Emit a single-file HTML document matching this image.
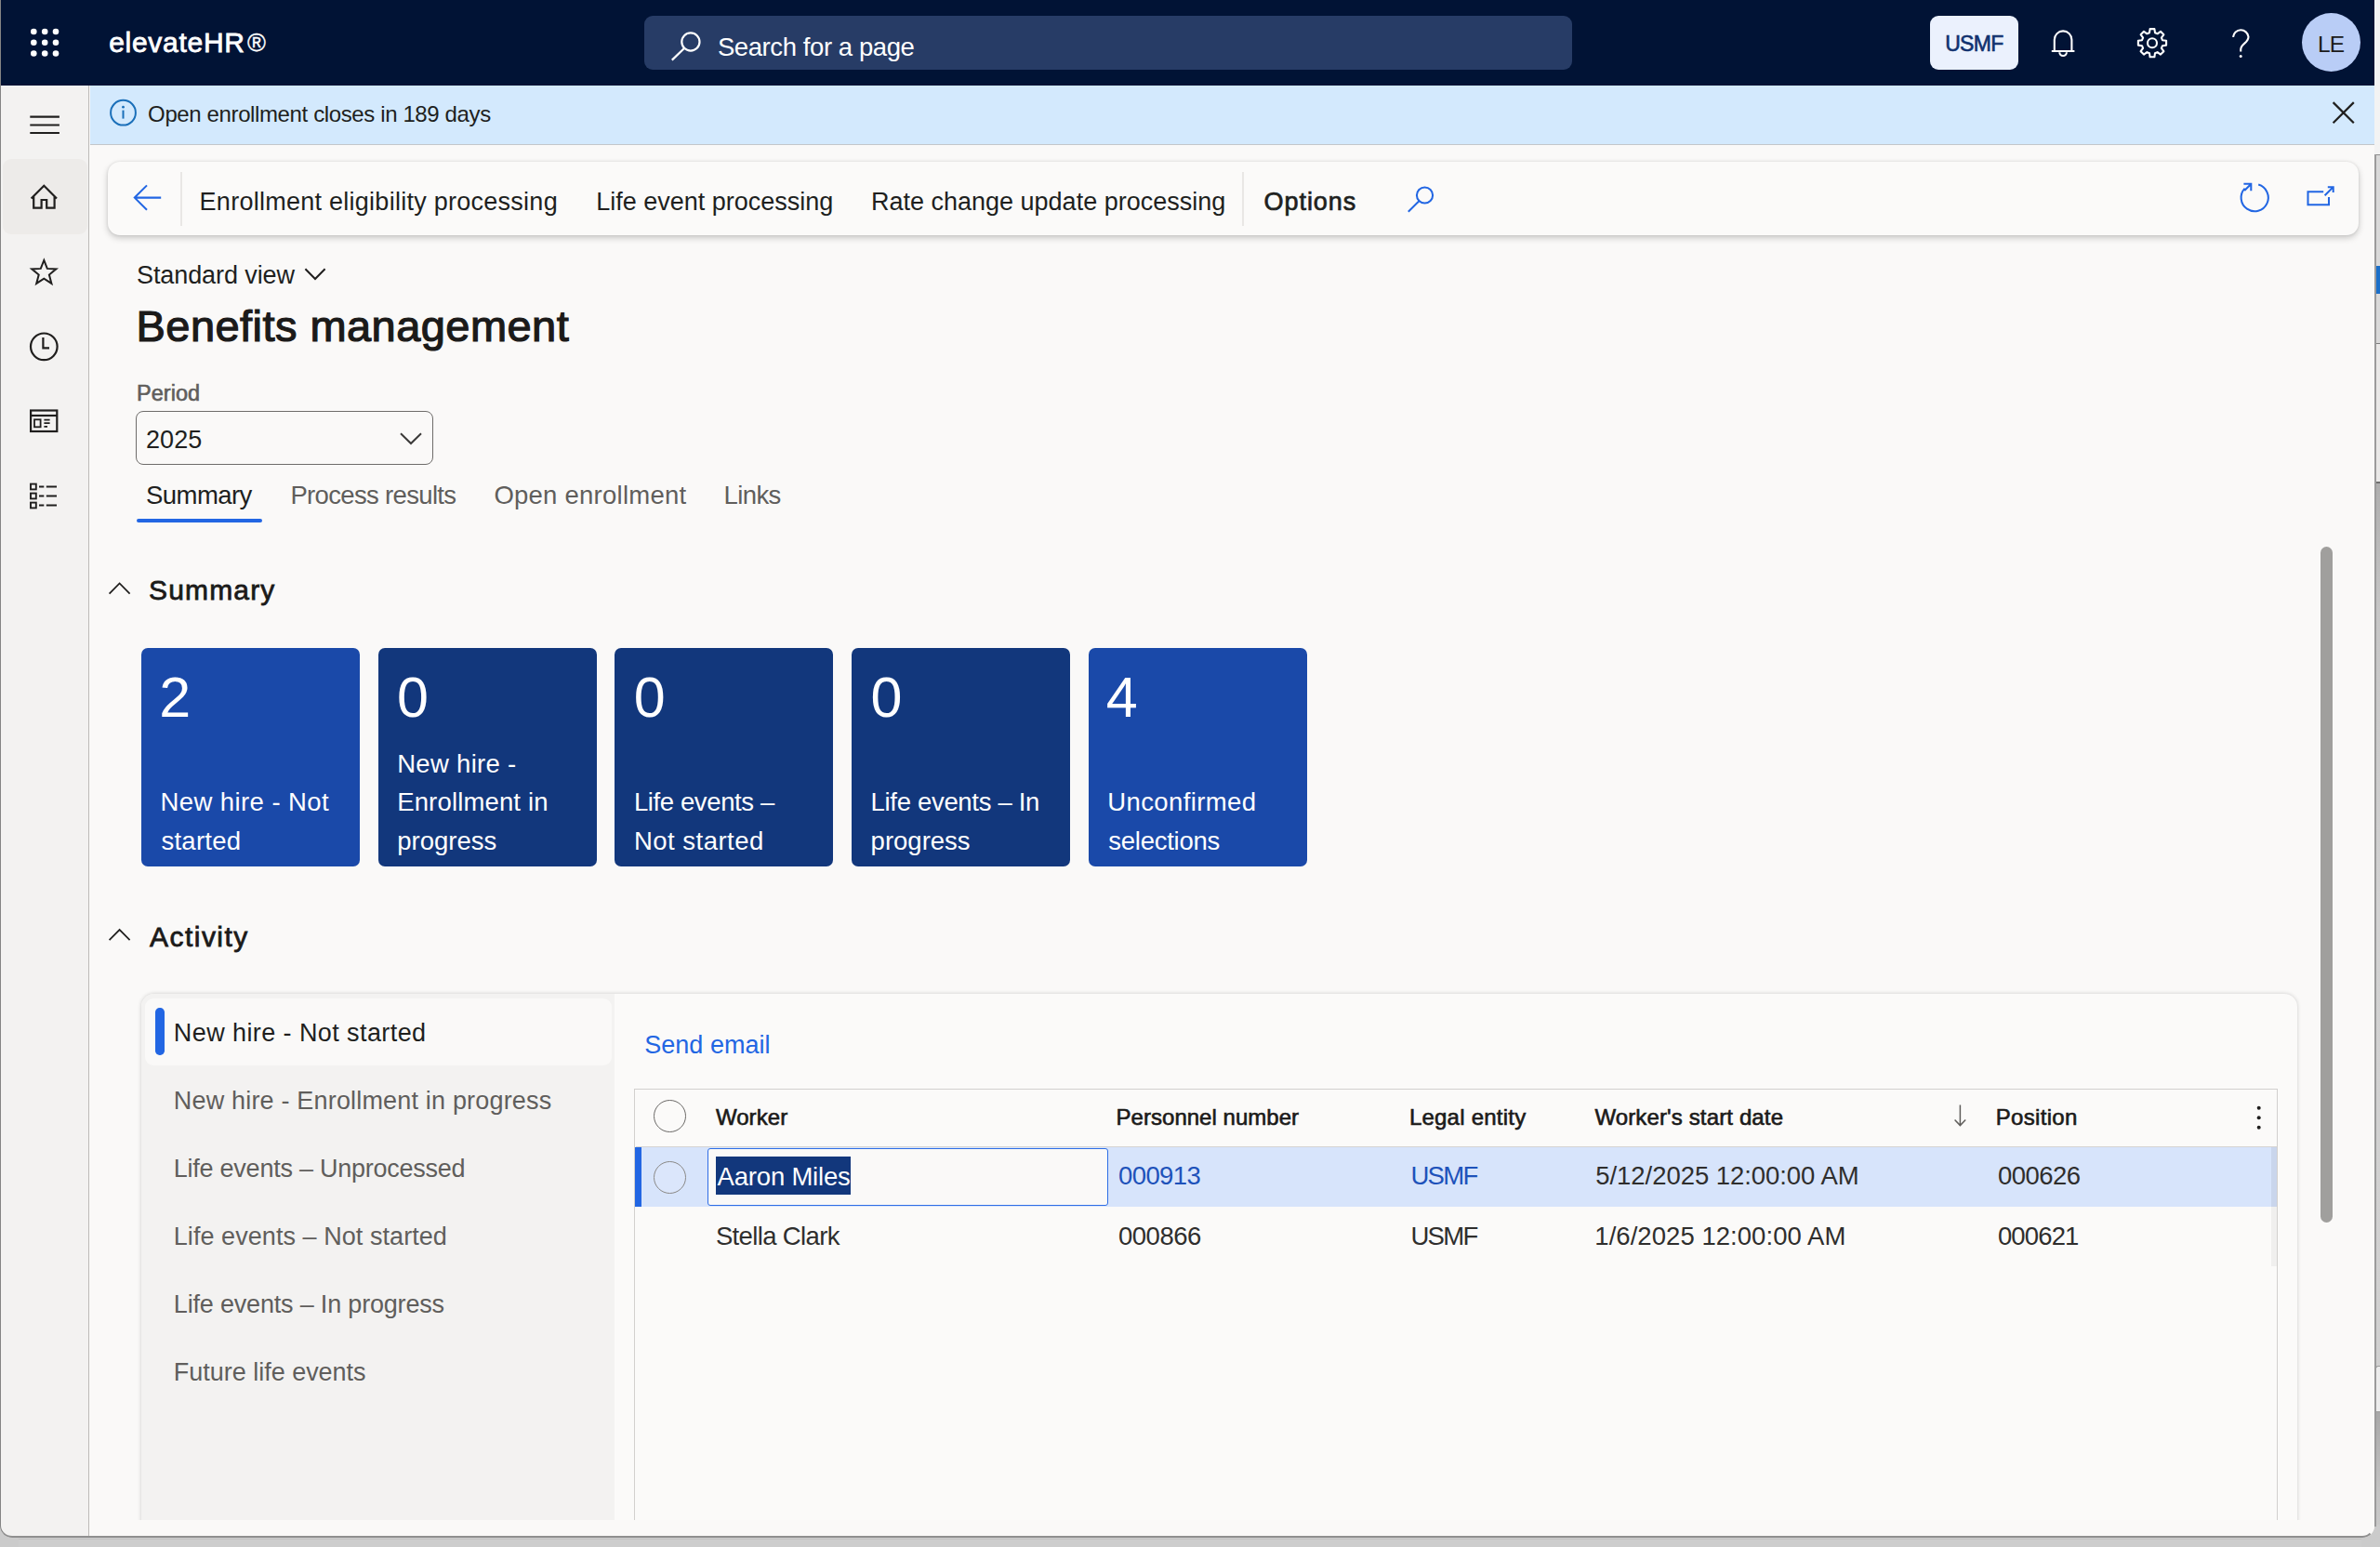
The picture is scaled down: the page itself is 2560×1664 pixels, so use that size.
<!DOCTYPE html>
<html lang="en"><head><meta charset="utf-8"><title>Benefits management</title>
<style>
html,body{margin:0;padding:0;}
html{width:2560px;height:1664px;overflow:hidden;}
body{width:2560px;height:1664px;overflow:hidden;position:relative;background:#cbcbcb;font-family:"Liberation Sans",sans-serif;}
.a{position:absolute;}
.t{position:absolute;white-space:pre;line-height:1;font-family:"Liberation Sans",sans-serif;}
svg{position:absolute;overflow:visible;}
#win{position:absolute;left:0;top:0;width:2554px;height:1654px;background:#faf9f8;border-radius:0 0 13px 13px;overflow:hidden;}
#winedge{position:absolute;left:0;top:0;width:2554px;height:1654px;border-radius:0 0 13px 13px;box-sizing:border-box;border-left:1.5px solid #858585;border-bottom:2px solid #8f8f8f;border-right:2px solid transparent;pointer-events:none;}
#topbar{left:0;top:0;width:2554px;height:92px;background:#011335;}
#searchbox{left:693px;top:17px;width:998px;height:58px;border-radius:9px;background:#273c66;}
#usmfbtn{left:2076px;top:17px;width:95px;height:58px;border-radius:9px;background:#ebf1fd;}
#avatar{left:2475.5px;top:13.7px;width:63px;height:63px;border-radius:50%;background:#b9cdf6;}
#nav{left:0;top:92px;width:95px;height:1562px;background:#f3f2f1;}
#navline{left:95px;top:92px;width:1px;height:1562px;background:#bdbbb9;}
#navsel{left:2.5px;top:171px;width:91.5px;height:81px;border-radius:9px;background:#edebe9;}
#infobar{left:96.5px;top:92px;width:2457.5px;height:62.5px;background:#d3e9fd;border-bottom:1.5px solid #c3c6ca;}
#apane{left:116px;top:174px;width:2420.5px;height:79px;border-radius:13px;background:#fbfaf9;box-shadow:0 3px 7px rgba(0,0,0,.20),0 0 3px rgba(0,0,0,.10);}
.sep{width:2px;background:#e9e7e5;top:185px;height:58px;}
#period{left:146px;top:441.5px;width:319.5px;height:58.5px;box-sizing:border-box;border:1.5px solid #6e6c6a;border-radius:8px;background:#faf9f8;}
#tabline{left:147px;top:558px;width:134.5px;height:4px;border-radius:2px;background:#2266e3;}
.tile{position:absolute;top:697px;width:235px;height:235px;border-radius:7px;}
#card{left:152px;top:1069px;width:2318.5px;height:640px;border-radius:14px;background:#fbfaf9;box-shadow:0 0 4px rgba(0,0,0,.19);}
#cardin{left:0;top:0;width:2318.5px;height:640px;border-radius:14px;overflow:hidden;}
#lpanel{left:0;top:0;width:509px;height:640px;background:#f3f2f1;}
#lisel{left:3.5px;top:5px;width:502.5px;height:72px;border-radius:9px;background:#faf9f8;}
#libar{left:15.4px;top:15px;width:9.4px;height:51.2px;border-radius:4.7px;background:#2266e3;}
#clip{left:96.5px;top:1635px;width:2457.5px;height:19px;background:#faf9f8;}
#grid{left:682px;top:1170.5px;width:1767.5px;height:500px;box-sizing:border-box;border:1.5px solid #d2d0ce;border-bottom:none;background:#fbfaf9;}
#row1{left:683.5px;top:1234px;width:1765px;height:64px;background:#d7e4fb;}
#row1bar{left:683px;top:1234px;width:7px;height:64px;background:#2266e3;}
#cell{left:761px;top:1234.5px;width:431px;height:62.5px;box-sizing:border-box;border:1.5px solid #2f6ee5;border-radius:3px;background:#faf9f8;}
#sel{left:769.5px;top:1243.5px;width:145px;height:41.5px;background:#12377c;}
.circ{width:35px;height:35px;box-sizing:border-box;border-radius:50%;border:1.6px solid #6b6967;}
#vthumb{left:2496px;top:588px;width:13px;height:727px;border-radius:6.5px;background:#a09f9d;}

</style></head>
<body>
<!-- background strip of other windows peeking out on the right -->
<div class="a" style="left:2554px;top:0;width:6px;height:166px;background:#f3f3f3"></div>
<div class="a" style="left:2554px;top:166px;width:6px;height:203px;background:#d9d9d9;border-top:1.5px solid #8d8d8d;box-sizing:border-box"></div>
<div class="a" style="left:2554px;top:286px;width:6px;height:30px;background:#1a6fc9"></div>
<div class="a" style="left:2554px;top:369px;width:6px;height:149px;background:#e9e8e7;border-top:1.5px solid #7d7d7d;box-sizing:border-box"></div>
<div class="a" style="left:2554px;top:518px;width:6px;height:1146px;background:linear-gradient(#aeaeae,#c6c6c6 12%,#d2d2d2 40%,#cfcfcf);border-top:2px solid #6f6f6f;box-sizing:border-box"></div>
<div class="a" style="left:2555px;top:1469px;width:5px;height:50px;background:#ececec;border:1px solid #9d9d9d;border-right:none;border-radius:3px 0 0 0;box-sizing:border-box"></div>
<div class="a" style="left:2554px;top:1519px;width:6px;height:145px;background:linear-gradient(#a8a8a8,#c4c4c4 60%,#cbcbcb)"></div>
<div class="a" style="left:0;top:1640px;width:2560px;height:24px;background:#cbcbcb"></div>
<div class="a" style="left:20px;top:1655px;width:2520px;height:9px;background:#cdcdcd;border-top:1px solid #c2c2c2"></div>

<div id="win">
  <div id="nav" class="a"></div>
  <div id="navline" class="a"></div>
  <div id="navsel" class="a"></div>
  <div id="topbar" class="a"></div>
  <div id="searchbox" class="a"></div>
  <div id="usmfbtn" class="a"></div>
  <div id="avatar" class="a"></div>
  <div id="infobar" class="a"></div>
  <div id="apane" class="a"></div>
  <div class="a sep" style="left:193.5px"></div>
  <div class="a sep" style="left:1336px"></div>
  <div id="period" class="a"></div>
  <div id="tabline" class="a"></div>
<div class="tile" style="left:152.0px;background:#1a49a9"></div>
<div class="tile" style="left:406.7px;background:#12377c"></div>
<div class="tile" style="left:661.4px;background:#12377c"></div>
<div class="tile" style="left:916.1px;background:#12377c"></div>
<div class="tile" style="left:1170.8px;background:#1a49a9"></div>
  <div id="card" class="a"><div id="cardin" class="a">
    <div id="lpanel" class="a"></div>
    <div id="lisel" class="a"></div>
    <div id="libar" class="a"></div>
  </div></div>
  <div id="grid" class="a"></div>
  <div class="a" style="left:683.5px;top:1233px;width:1765px;height:1px;background:#d6d4d2"></div>
  <div id="row1" class="a"></div>
  <div class="a" style="left:2443px;top:1234px;width:5.5px;height:64px;background:#c9d5ec"></div>
  <div class="a" style="left:2443px;top:1298px;width:5.5px;height:64px;background:#f0efee"></div>
  <div id="row1bar" class="a"></div>
  <div id="cell" class="a"></div>
  <div id="sel" class="a"></div>
  <div class="a circ" style="left:703.2px;top:1183px"></div>
  <div class="a circ" style="left:703.2px;top:1248.5px;border-color:#8a8886;background:#dbe6fb"></div>
  <div id="clip" class="a"></div>
  <div id="vthumb" class="a"></div>

  <svg width="2560" height="1664" viewBox="0 0 2560 1664" style="left:0;top:0" fill="none" stroke-linecap="butt" stroke-linejoin="miter">
    <!-- waffle -->
    <g fill="#fff">
      <circle cx="36.3" cy="34" r="3.3"/><circle cx="48.2" cy="34" r="3.3"/><circle cx="60" cy="34" r="3.3"/>
      <circle cx="36.3" cy="45.7" r="3.3"/><circle cx="48.2" cy="45.7" r="3.3"/><circle cx="60" cy="45.7" r="3.3"/>
      <circle cx="36.3" cy="57.5" r="3.3"/><circle cx="48.2" cy="57.5" r="3.3"/><circle cx="60" cy="57.5" r="3.3"/>
    </g>
    <!-- top search icon -->
    <g stroke="#fff" stroke-width="2.2">
      <circle cx="742.9" cy="45" r="9.6"/>
      <path d="M736.2 51.8 L722.8 64.6"/>
    </g>
    <!-- bell, gear, help -->
    <g stroke="#fff" stroke-width="2.1">
      <path d="M2209.8 55 V42.7 a9.3 9.3 0 0 1 18.6 0 V55 M2206.8 55 H2231.4 M2215.3 56.2 a3.8 3.8 0 0 0 7.6 0"/>
      <path d="M2312.0 35.2 L2312.6 31.1 L2317.4 31.1 L2318.0 35.2 L2320.6 36.3 L2324.0 33.8 L2327.4 37.2 L2324.9 40.6 L2326.0 43.2 L2330.1 43.8 L2330.1 48.6 L2326.0 49.2 L2324.9 51.8 L2327.4 55.2 L2324.0 58.6 L2320.6 56.1 L2318.0 57.2 L2317.4 61.3 L2312.6 61.3 L2312.0 57.2 L2309.4 56.1 L2306.0 58.6 L2302.6 55.2 L2305.1 51.8 L2304.0 49.2 L2299.9 48.6 L2299.9 43.8 L2304.0 43.2 L2305.1 40.6 L2302.6 37.2 L2306.0 33.8 L2309.4 36.3 Z" stroke-linejoin="round"/>
      <circle cx="2315" cy="46.2" r="5"/>
      <path d="M2402 39.8 A8.3 8.3 0 0 1 2418.5 39.6 C2418.5 46.5 2410.2 46.8 2410.2 53.5 V55.6"/>
      <circle cx="2410.2" cy="60.4" r="1.5" fill="#fff" stroke="none"/>
    </g>
    <!-- nav icons -->
    <g stroke="#201f1e" stroke-width="2.2">
      <path d="M32.3 125.7 H63.9 M32.3 134.5 H63.9 M32.3 143 H63.9"/>
      <path d="M33.6 213.6 L47.3 199.8 L61 213.6 M36.2 211.4 V223.6 H44.6 V215 H50.2 V223.6 H58.6 V211.4"/>
      <path d="M47.3 279.9 L50.8 288.9 L60.4 289.4 L52.9 295.5 L55.4 304.9 L47.3 299.6 L39.2 304.9 L41.7 295.5 L34.2 289.4 L43.8 288.9 Z" stroke-width="2"/>
      <circle cx="47.3" cy="372.8" r="14.3"/>
      <path d="M46.4 363 V374.4 H53"/>
      <rect x="33.1" y="441.5" width="28.2" height="22.5"/>
      <path d="M33 447 H61.4"/>
      <rect x="37" y="451.3" width="6.6" height="8" stroke-width="1.8"/>
      <path d="M47.4 451.6 H53.6 M47.4 455.2 H53.6 M47.4 458.8 H51" stroke-width="1.8"/>
      <g stroke-width="1.9">
        <rect x="33" y="520.6" width="5.8" height="5.8"/><path d="M42 523.5 H47.3 M49.8 523.5 H61"/>
        <rect x="33" y="530.6" width="5.8" height="5.8"/><path d="M42 533.5 H47.3 M49.8 533.5 H61"/>
        <rect x="33" y="540.6" width="5.8" height="5.8"/><path d="M42 543.5 H47.3 M49.8 543.5 H61"/>
      </g>
    </g>
    <!-- info icon / close -->
    <g stroke="#1a6fb9" stroke-width="2">
      <circle cx="132.5" cy="121.2" r="13.4"/>
      <path d="M132.5 118.6 V127.6"/>
      <circle cx="132.5" cy="115.2" r="1.4" fill="#1a6fb9" stroke="none"/>
    </g>
    <path d="M2509.6 110.1 L2531.8 132.3 M2531.8 110.1 L2509.6 132.3" stroke="#201f1e" stroke-width="2.2"/>
    <!-- action pane icons -->
    <g stroke="#2266e3" stroke-width="2.05">
      <path d="M173.2 212.6 H145 M158 199.4 L144.8 212.6 L158 225.8"/>
      <circle cx="1532.5" cy="210" r="8.6"/>
      <path d="M1526.4 216.2 L1514.8 227.7"/>
      <path d="M2429.2 198.6 A14.6 14.6 0 1 1 2414.6 202.6"/>
      <path d="M2414.2 205 L2421.2 198 M2413.4 197.7 H2421.3 V205.2"/>
      <path d="M2499.2 206.3 H2482.5 V220.3 H2505 V212"/>
      <path d="M2500.6 210.2 L2509.2 201.6 M2503.8 201.2 H2509.7 V207"/>
    </g>
    <!-- chevrons -->
    <path d="M328.4 289.3 L339 300 L349.6 289.3" stroke="#201f1e" stroke-width="2"/>
    <path d="M431 466.2 L442 477 L453 466.2" stroke="#3b3a39" stroke-width="2"/>
    <path d="M117.6 638.6 L128.6 627.5 L139.6 638.6" stroke="#201f1e" stroke-width="1.75"/>
    <path d="M117.6 1011.2 L128.6 1000.1 L139.6 1011.2" stroke="#201f1e" stroke-width="1.75"/>
    <!-- grid header icons -->
    <path d="M2108.4 1188.4 V1210.4 M2102.6 1204.6 L2108.4 1210.6 L2114.2 1204.6" stroke="#605e5c" stroke-width="1.5"/>
    <g fill="#201f1e"><circle cx="2429.7" cy="1191.8" r="2"/><circle cx="2429.7" cy="1202.3" r="2"/><circle cx="2429.7" cy="1212.8" r="2"/></g>
  </svg>
<span class="t" style="left:117.2px;top:31.1px;font-size:30px;letter-spacing:0.713px;color:#ffffff;-webkit-text-stroke:0.78px currentColor;">elevateHR</span>
<span class="t" style="left:266.1px;top:32.9px;font-size:27px;letter-spacing:0px;color:#ffffff;-webkit-text-stroke:0.32px currentColor;">®</span>
<span class="t" style="left:771.9px;top:36.7px;font-size:27.5px;letter-spacing:-0.412px;color:#ffffff;">Search for a page</span>
<span class="t" style="left:2092.2px;top:36.0px;font-size:23px;letter-spacing:-0.7px;color:#10316f;-webkit-text-stroke:0.60px currentColor;">USMF</span>
<span class="t" style="left:2493.1px;top:36.3px;font-size:24.5px;letter-spacing:-1.0px;color:#1b1a19;">LE</span>
<span class="t" style="left:159.1px;top:111.4px;font-size:24px;letter-spacing:-0.379px;color:#201f1e;">Open enrollment closes in 189 days</span>
<span class="t" style="left:214.6px;top:203.8px;font-size:27px;letter-spacing:0.262px;color:#201f1e;">Enrollment eligibility processing</span>
<span class="t" style="left:641.3px;top:203.8px;font-size:27px;letter-spacing:-0.015px;color:#201f1e;">Life event processing</span>
<span class="t" style="left:936.9px;top:203.8px;font-size:27px;letter-spacing:0.004px;color:#201f1e;">Rate change update processing</span>
<span class="t" style="left:1359.6px;top:203.8px;font-size:27px;letter-spacing:0.933px;color:#201f1e;-webkit-text-stroke:0.70px currentColor;">Options</span>
<span class="t" style="left:147.0px;top:282.9px;font-size:27px;letter-spacing:-0.092px;color:#201f1e;">Standard view</span>
<span class="t" style="left:146.5px;top:327.0px;font-size:47px;letter-spacing:0.444px;color:#1b1a19;-webkit-text-stroke:1.22px currentColor;">Benefits management</span>
<span class="t" style="left:147.0px;top:412.0px;font-size:23.5px;letter-spacing:0.04px;color:#605e5c;-webkit-text-stroke:0.61px currentColor;">Period</span>
<span class="t" style="left:157.1px;top:459.8px;font-size:27px;letter-spacing:0.0px;color:#201f1e;">2025</span>
<span class="t" style="left:157.1px;top:518.7px;font-size:27.5px;letter-spacing:-0.583px;color:#201f1e;">Summary</span>
<span class="t" style="left:312.4px;top:518.7px;font-size:27.5px;letter-spacing:-0.664px;color:#605e5c;">Process results</span>
<span class="t" style="left:531.4px;top:518.7px;font-size:27.5px;letter-spacing:0.243px;color:#605e5c;">Open enrollment</span>
<span class="t" style="left:778.5px;top:518.7px;font-size:27.5px;letter-spacing:-0.6px;color:#605e5c;">Links</span>
<span class="t" style="left:160.1px;top:620.0px;font-size:30px;letter-spacing:1.15px;color:#1b1a19;-webkit-text-stroke:0.78px currentColor;">Summary</span>
<span class="t" style="left:161.1px;top:992.7px;font-size:30px;letter-spacing:1.443px;color:#1b1a19;-webkit-text-stroke:0.78px currentColor;">Activity</span>
<span class="t" style="left:186.8px;top:1097.6px;font-size:27px;letter-spacing:0.414px;color:#201f1e;">New hire - Not started</span>
<span class="t" style="left:186.8px;top:1170.6px;font-size:27px;letter-spacing:0.181px;color:#605e5c;">New hire - Enrollment in progress</span>
<span class="t" style="left:186.8px;top:1243.6px;font-size:27px;letter-spacing:-0.246px;color:#605e5c;">Life events – Unprocessed</span>
<span class="t" style="left:186.8px;top:1316.6px;font-size:27px;letter-spacing:0.058px;color:#605e5c;">Life events – Not started</span>
<span class="t" style="left:186.8px;top:1389.6px;font-size:27px;letter-spacing:-0.183px;color:#605e5c;">Life events – In progress</span>
<span class="t" style="left:186.8px;top:1462.6px;font-size:27px;letter-spacing:-0.018px;color:#605e5c;">Future life events</span>
<span class="t" style="left:693.3px;top:1111.2px;font-size:27px;letter-spacing:0.011px;color:#2266e3;">Send email</span>
<span class="t" style="left:769.9px;top:1190.0px;font-size:24px;letter-spacing:0.08px;color:#1b1a19;-webkit-text-stroke:0.62px currentColor;">Worker</span>
<span class="t" style="left:1200.6px;top:1190.0px;font-size:24px;letter-spacing:0.02px;color:#1b1a19;-webkit-text-stroke:0.62px currentColor;">Personnel number</span>
<span class="t" style="left:1515.9px;top:1190.0px;font-size:24px;letter-spacing:0.227px;color:#1b1a19;-webkit-text-stroke:0.62px currentColor;">Legal entity</span>
<span class="t" style="left:1715.4px;top:1190.0px;font-size:24px;letter-spacing:0.133px;color:#1b1a19;-webkit-text-stroke:0.62px currentColor;">Worker&#x27;s start date</span>
<span class="t" style="left:2146.8px;top:1190.0px;font-size:24px;letter-spacing:0.314px;color:#1b1a19;-webkit-text-stroke:0.62px currentColor;">Position</span>
<span class="t" style="left:771.6px;top:1251.5px;font-size:27.5px;letter-spacing:-0.2px;color:#ffffff;">Aaron Miles</span>
<span class="t" style="left:1203.0px;top:1251.4px;font-size:27.5px;letter-spacing:-0.6px;color:#1e52ba;">000913</span>
<span class="t" style="left:1517.4px;top:1251.4px;font-size:27.5px;letter-spacing:-1.633px;color:#1e52ba;">USMF</span>
<span class="t" style="left:1716.3px;top:1251.4px;font-size:27.5px;letter-spacing:-0.055px;color:#2f2e2d;">5/12/2025 12:00:00 AM</span>
<span class="t" style="left:2148.9px;top:1251.4px;font-size:27.5px;letter-spacing:-0.54px;color:#2f2e2d;">000626</span>
<span class="t" style="left:769.9px;top:1315.8px;font-size:27.5px;letter-spacing:-0.645px;color:#2f2e2d;">Stella Clark</span>
<span class="t" style="left:1203.0px;top:1315.8px;font-size:27.5px;letter-spacing:-0.5px;color:#2f2e2d;">000866</span>
<span class="t" style="left:1517.4px;top:1315.8px;font-size:27.5px;letter-spacing:-1.633px;color:#2f2e2d;">USMF</span>
<span class="t" style="left:1715.3px;top:1315.8px;font-size:27.5px;letter-spacing:0.047px;color:#2f2e2d;">1/6/2025 12:00:00 AM</span>
<span class="t" style="left:2148.9px;top:1315.8px;font-size:27.5px;letter-spacing:-0.86px;color:#2f2e2d;">000621</span>
<span class="t" style="left:171.3px;top:720.0px;font-size:61px;letter-spacing:0px;color:#ffffff;">2</span>
<span class="t" style="left:172.5px;top:849.2px;font-size:27.5px;letter-spacing:0.415px;color:#ffffff;">New hire - Not</span>
<span class="t" style="left:173.5px;top:890.8px;font-size:27.5px;letter-spacing:0.233px;color:#ffffff;">started</span>
<span class="t" style="left:427.0px;top:720.0px;font-size:61px;letter-spacing:0px;color:#ffffff;">0</span>
<span class="t" style="left:427.2px;top:807.6px;font-size:27.5px;letter-spacing:0.3px;color:#ffffff;">New hire -</span>
<span class="t" style="left:427.2px;top:849.2px;font-size:27.5px;letter-spacing:0.15px;color:#ffffff;">Enrollment in</span>
<span class="t" style="left:427.2px;top:890.8px;font-size:27.5px;letter-spacing:-0.0px;color:#ffffff;">progress</span>
<span class="t" style="left:681.7px;top:720.0px;font-size:61px;letter-spacing:0px;color:#ffffff;">0</span>
<span class="t" style="left:681.9px;top:849.2px;font-size:27.5px;letter-spacing:-0.383px;color:#ffffff;">Life events –</span>
<span class="t" style="left:681.9px;top:890.8px;font-size:27.5px;letter-spacing:0.49px;color:#ffffff;">Not started</span>
<span class="t" style="left:936.4px;top:720.0px;font-size:61px;letter-spacing:0px;color:#ffffff;">0</span>
<span class="t" style="left:936.6px;top:849.2px;font-size:27.5px;letter-spacing:-0.32px;color:#ffffff;">Life events – In</span>
<span class="t" style="left:936.6px;top:890.8px;font-size:27.5px;letter-spacing:0.0px;color:#ffffff;">progress</span>
<span class="t" style="left:1189.8px;top:720.0px;font-size:61px;letter-spacing:0px;color:#ffffff;">4</span>
<span class="t" style="left:1191.3px;top:849.2px;font-size:27.5px;letter-spacing:0.39px;color:#ffffff;">Unconfirmed</span>
<span class="t" style="left:1192.3px;top:890.8px;font-size:27.5px;letter-spacing:-0.267px;color:#ffffff;">selections</span>
</div>
<div id="winedge"></div>
<div class="a" style="left:2553.5px;top:166px;width:2px;height:1476px;background:#9b9b9b"></div>

</body></html>
